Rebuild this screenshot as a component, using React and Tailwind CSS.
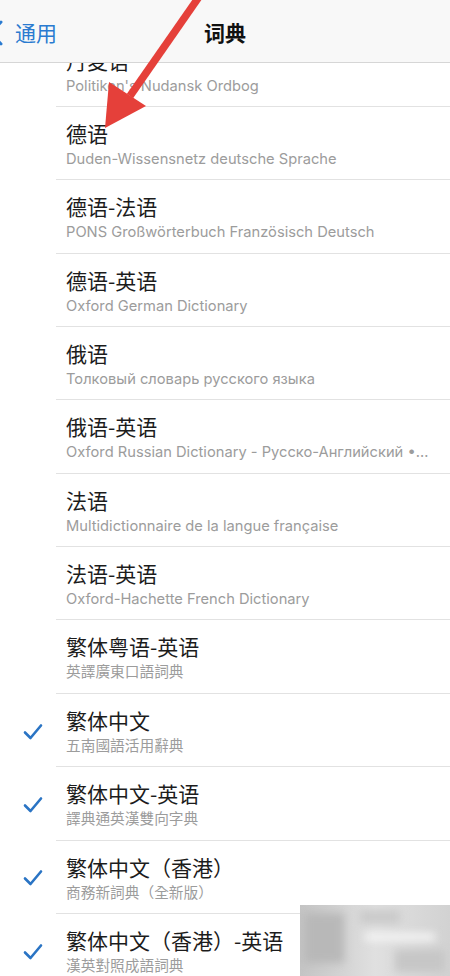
import React from "react";

const rows = [
  { title: "丹麦语", sub: "Politiken's Nudansk Ordbog" },
  { title: "德语", sub: "Duden-Wissensnetz deutsche Sprache" },
  { title: "德语-法语", sub: "PONS Großwörterbuch Französisch Deutsch" },
  { title: "德语-英语", sub: "Oxford German Dictionary" },
  { title: "俄语", sub: "Толковый словарь русского языка" },
  { title: "俄语-英语", sub: "Oxford Russian Dictionary - Русско-Английский • Англо-Русский" },
  { title: "法语", sub: "Multidictionnaire de la langue française" },
  { title: "法语-英语", sub: "Oxford-Hachette French Dictionary" },
  { title: "繁体粤语-英语", sub: "英譯廣東口語詞典" },
  { title: "繁体中文", sub: "五南國語活用辭典", checked: true },
  { title: "繁体中文-英语", sub: "譯典通英漢雙向字典", checked: true },
  { title: "繁体中文（香港）", sub: "商務新詞典（全新版）", checked: true },
  { title: "繁体中文（香港）-英语", sub: "漢英對照成語詞典", checked: true },
];

function Check() {
  return (
    <svg width="20" height="18" viewBox="0 0 20 18" fill="none">
      <path d="M2 9.5 L7.5 15 L18 2.5" stroke="#2a74c4" strokeWidth="2.6" strokeLinecap="round" strokeLinejoin="round" />
    </svg>
  );
}

function Row({ title, sub, checked }) {
  return (
    <div className="flex h-[73.36px]">
      <div className="w-[56px] shrink-0 flex items-center justify-center pl-[10px] pt-[2px]">
        {checked ? <Check /> : null}
      </div>
      <div className="flex-1 min-w-0 border-b border-[#e2e2e2] pl-[10px] pr-[18px] flex flex-col">
        <div className="pt-[12px] text-[21px] leading-[28px] text-[#1c1c1c] font-['Noto_Sans_CJK_SC',sans-serif]">
          {title}
        </div>
        <div className="mt-[3px] text-[14.7px] leading-[19px] text-[#9c9c9c] truncate font-['Inter','Noto_Sans_CJK_TC',sans-serif]">
          {sub}
        </div>
      </div>
    </div>
  );
}

export default function App() {
  return (
    <div className="relative w-[450px] h-[976px] overflow-hidden bg-white">
      <div className="pt-[33.6px]">
        {rows.map((r) => (
          <Row key={r.title} {...r} />
        ))}
      </div>

      {/* navigation bar */}
      <div className="absolute top-0 left-0 right-0 h-[63px] bg-[#f8f8f8] border-b border-[#d6d6d6] flex items-center">
        <div className="flex items-center text-[#2a7bd0] font-['Noto_Sans_CJK_SC',sans-serif] text-[21px] pt-[3px]">
          <svg width="16" height="26" viewBox="0 0 16 26" className="ml-[-12px]">
            <path d="M13 2 L3 13 L13 24" stroke="#2a7bd0" strokeWidth="3" fill="none" strokeLinecap="round" strokeLinejoin="round" />
          </svg>
          <span className="ml-[11px]">通用</span>
        </div>
        <div className="absolute left-0 right-0 pt-[4px] text-center text-[21px] font-bold text-[#111] font-['Noto_Sans_CJK_SC',sans-serif] pointer-events-none">
          词典
        </div>
      </div>

      {/* red annotation arrow */}
      <svg className="absolute top-0 left-0 pointer-events-none" width="450" height="160" viewBox="0 0 450 160">
        <line x1="201" y1="-6" x2="130" y2="96" stroke="#e5403a" strokeWidth="7.5" />
        <polygon points="105,128 109,82 146,106" fill="#e5403a" />
      </svg>

      {/* blurred watermark */}
      <div className="absolute left-[300px] top-[905px] w-[150px] h-[71px] overflow-hidden bg-gradient-to-r from-[#c4c4c4] via-[#e0e0e0] to-[#d2d2d2]">
        <div className="absolute inset-0 blur-[4px]">
          <div className="absolute left-[65px] top-[28px] w-[70px] h-[8px] bg-[#f4f4f4]" />
          <div className="absolute left-[4px] top-[8px] w-[40px] h-[50px] bg-[#b8b8b8]" />
          <div className="absolute left-[95px] top-[45px] w-[50px] h-[22px] bg-[#c6c6c6]" />
          <div className="absolute left-[60px] top-[5px] w-[40px] h-[14px] bg-[#cacaca]" />
        </div>
      </div>
    </div>
  );
}
